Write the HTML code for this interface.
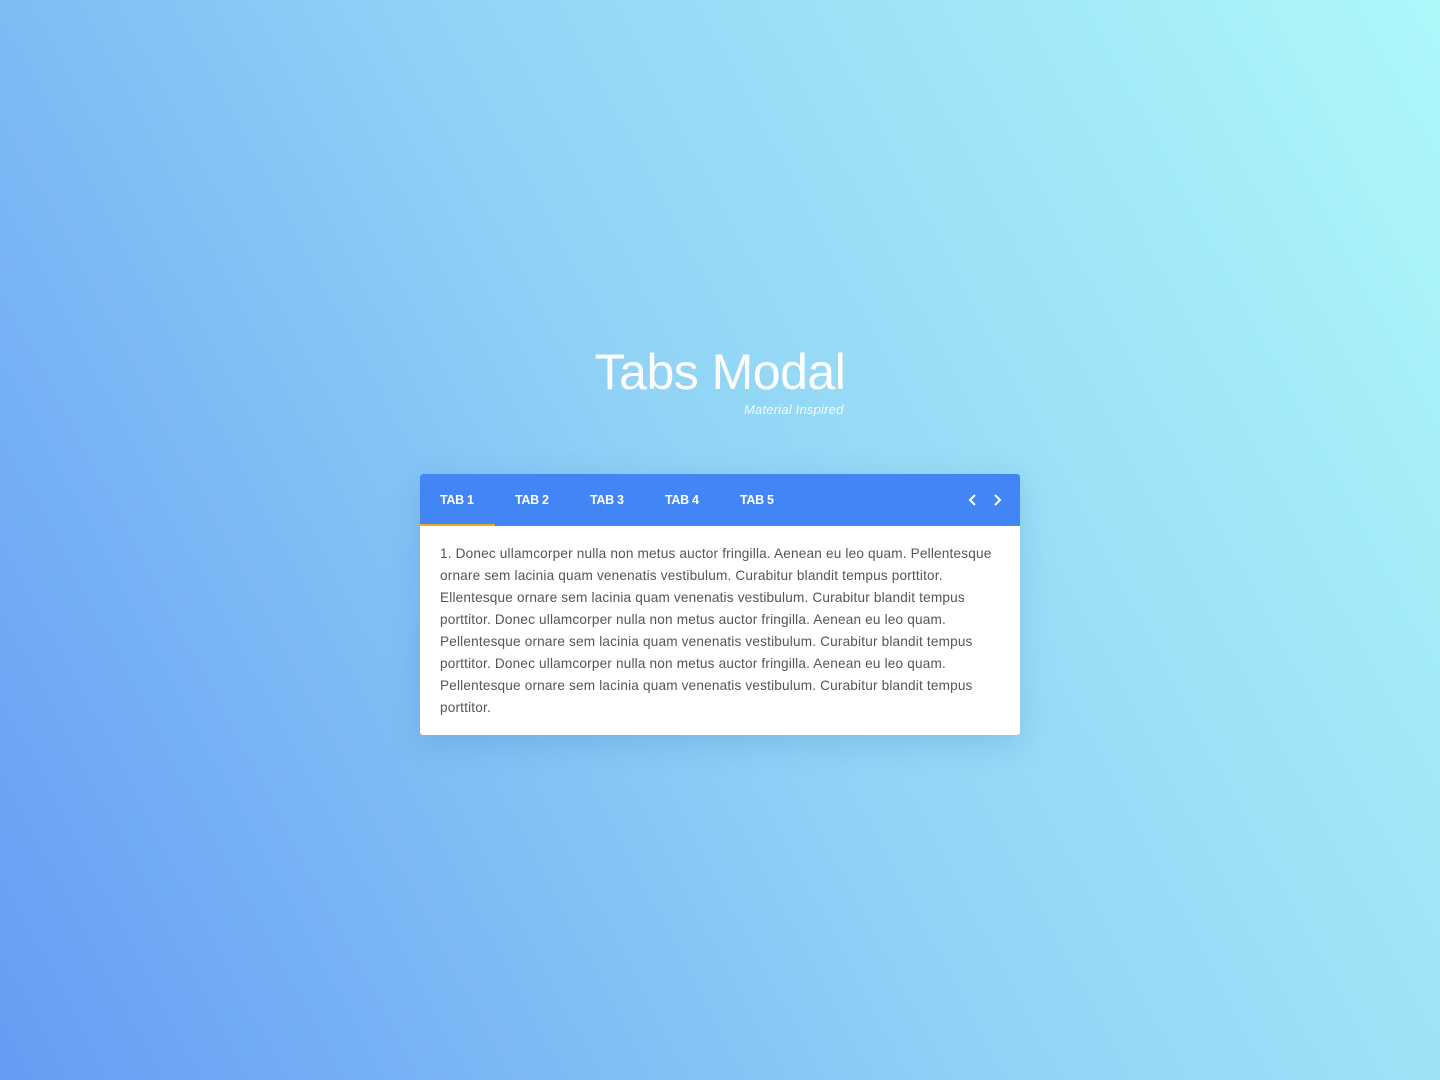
<!DOCTYPE html>
<html><head><meta charset="utf-8"><style>
html,body{margin:0;height:100%;}
body{width:1440px;height:1080px;position:relative;overflow:hidden;font-family:"Liberation Sans",sans-serif;
background:linear-gradient(62deg,#659cf4 0%,#90d3f6 50%,#adf8f9 100%);}
h1{position:absolute;left:0;width:1440px;top:342px;margin:0;text-align:center;color:#fff;font-weight:400;font-size:50px;line-height:60px;letter-spacing:-0.5px;}
.sub{position:absolute;left:744px;top:402px;color:#fff;font-style:italic;font-size:13px;opacity:.9;letter-spacing:0.2px;}
.card{position:absolute;left:420px;top:474px;width:600px;height:261px;background:#fff;border-radius:3px;box-shadow:0 8px 30px rgba(40,90,160,.18);overflow:hidden;}
.bar{height:52px;background:#4285f4;position:relative;}
.tab{position:absolute;top:0;height:52px;line-height:52px;color:#fff;font-weight:700;font-size:12.5px;letter-spacing:-0.3px;}
.ind{position:absolute;left:0;bottom:0;width:75px;height:2px;background:#f5a623;}
.txt{position:absolute;left:20px;top:69px;font-size:13.6px;line-height:22px;color:#555;white-space:nowrap;letter-spacing:0.18px;}
svg{position:absolute;top:19px;}
</style></head><body>
<h1>Tabs Modal</h1>
<div class="sub">Material Inspired</div>
<div class="card">
<div class="bar">
<div class="tab" style="left:20px">TAB 1</div>
<div class="tab" style="left:95px">TAB 2</div>
<div class="tab" style="left:170px">TAB 3</div>
<div class="tab" style="left:245px">TAB 4</div>
<div class="tab" style="left:320px">TAB 5</div>
<svg style="left:547px" width="12" height="14" viewBox="0 0 12 14"><path d="M8 2 L3 7 L8 12" stroke="#fff" stroke-width="2" fill="none"/></svg>
<svg style="left:572px" width="12" height="14" viewBox="0 0 12 14"><path d="M3 2 L8 7 L3 12" stroke="#fff" stroke-width="2" fill="none"/></svg>
<div class="ind"></div>
</div>
<div class="txt">1. Donec ullamcorper nulla non metus auctor fringilla. Aenean eu leo quam. Pellentesque<br>ornare sem lacinia quam venenatis vestibulum. Curabitur blandit tempus porttitor.<br>Ellentesque ornare sem lacinia quam venenatis vestibulum. Curabitur blandit tempus<br>porttitor. Donec ullamcorper nulla non metus auctor fringilla. Aenean eu leo quam.<br>Pellentesque ornare sem lacinia quam venenatis vestibulum. Curabitur blandit tempus<br>porttitor. Donec ullamcorper nulla non metus auctor fringilla. Aenean eu leo quam.<br>Pellentesque ornare sem lacinia quam venenatis vestibulum. Curabitur blandit tempus<br>porttitor.</div>
</div>
</body></html>
